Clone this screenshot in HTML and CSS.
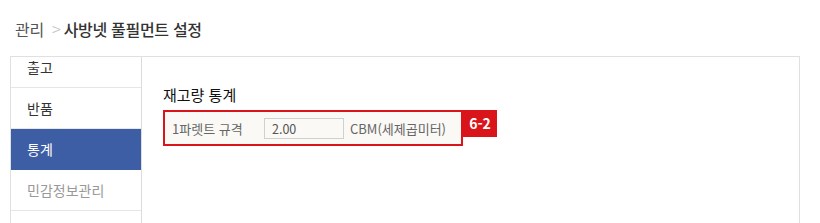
FILE: index.html
```html
<!DOCTYPE html>
<html lang="ko">
<head>
<meta charset="utf-8">
<link rel="stylesheet" href="styles.css">
</head>
<body>
<div class="breadcrumb">
  <span class="crumb">관리</span>
  <span class="sep">&gt;</span>
  <span class="current">사방넷 풀필먼트 설정</span>
</div>
<div class="panel">
  <ul class="sidebar">
    <li class="item first">출고</li>
    <li class="item">반품</li>
    <li class="item active">통계</li>
    <li class="item muted">민감정보관리</li>
  </ul>
  <div class="content">
    <h2 class="title">재고량 통계</h2>
    <div class="highlight">
      <div class="row">
        <span class="label">1파렛트 규격</span>
        <span class="input">2.00</span>
        <span class="unit">CBM(세제곱미터)</span>
      </div>
      <span class="badge">6-2</span>
    </div>
  </div>
</div>
</body>
</html>
```
FILE: styles.css
```css
html, body {
  margin: 0;
  padding: 0;
  background: #fff;
}
body {
  font-family: "Noto Sans CJK KR", "Noto Sans", sans-serif;
  color: #333;
  width: 820px;
  height: 223px;
  overflow: hidden;
}
.breadcrumb {
  height: 56px;
  box-sizing: border-box;
  padding: 18px 0 0 15px;
  font-size: 16px;
  line-height: 22px;
  display: flex;
  align-items: baseline;
  letter-spacing: -0.3px;
}
.crumb { color: #555; }
.sep {
  color: #c4c4c4;
  margin: 0 3px 0 8px;
  font-size: 17px;
  font-weight: 300;
}
.current {
  color: #333;
  font-weight: 500;
}
.panel {
  margin-left: 10px;
  width: 790px;
  height: 167px;
  box-sizing: border-box;
  border: 1px solid #e0e0e0;
  border-bottom: none;
  display: flex;
}
.sidebar {
  list-style: none;
  margin: 0;
  padding: 0;
  width: 131px;
  flex: none;
  box-sizing: border-box;
  border-right: 1px solid #dcdcdc;
}
.item {
  height: 40px;
  border-bottom: 1px solid #e6e6e6;
  padding-left: 16px;
  font-size: 14px;
  line-height: 40px;
  color: #333;
}
.item.first {
  height: 30px;
  line-height: 20px;
}
.item.active {
  background: #3d5da5;
  color: #fff;
  border-bottom-color: #3d5da5;
}
.item.muted {
  color: #999;
}
.content {
  flex: 1;
  padding: 26px 0 0 21px;
}
.title {
  margin: 0;
  font-size: 15px;
  font-weight: 400;
  color: #111;
  line-height: 24px;
}
.highlight {
  position: relative;
  width: 300px;
  height: 36px;
  margin-top: 3px;
  box-sizing: border-box;
  border: 2px solid #d9141b;
  background: #faf9f5;
}
.row {
  display: flex;
  align-items: center;
  height: 100%;
  padding-left: 7px;
  font-size: 13px;
  color: #666;
}
.label {
  width: 92px;
}
.input {
  width: 80px;
  height: 21px;
  box-sizing: border-box;
  border: 1px solid #d0d0d0;
  background: #faf9f5;
  color: #555;
  font-size: 12.5px;
  line-height: 19px;
  padding-left: 7px;
  margin-right: 6px;
}
.unit {
  color: #666;
}
.badge {
  position: absolute;
  top: -2px;
  left: 298px;
  width: 34px;
  height: 27px;
  background: #d9141b;
  color: #fff;
  font-size: 14px;
  font-weight: 700;
  line-height: 27px;
  text-align: center;
}
```
